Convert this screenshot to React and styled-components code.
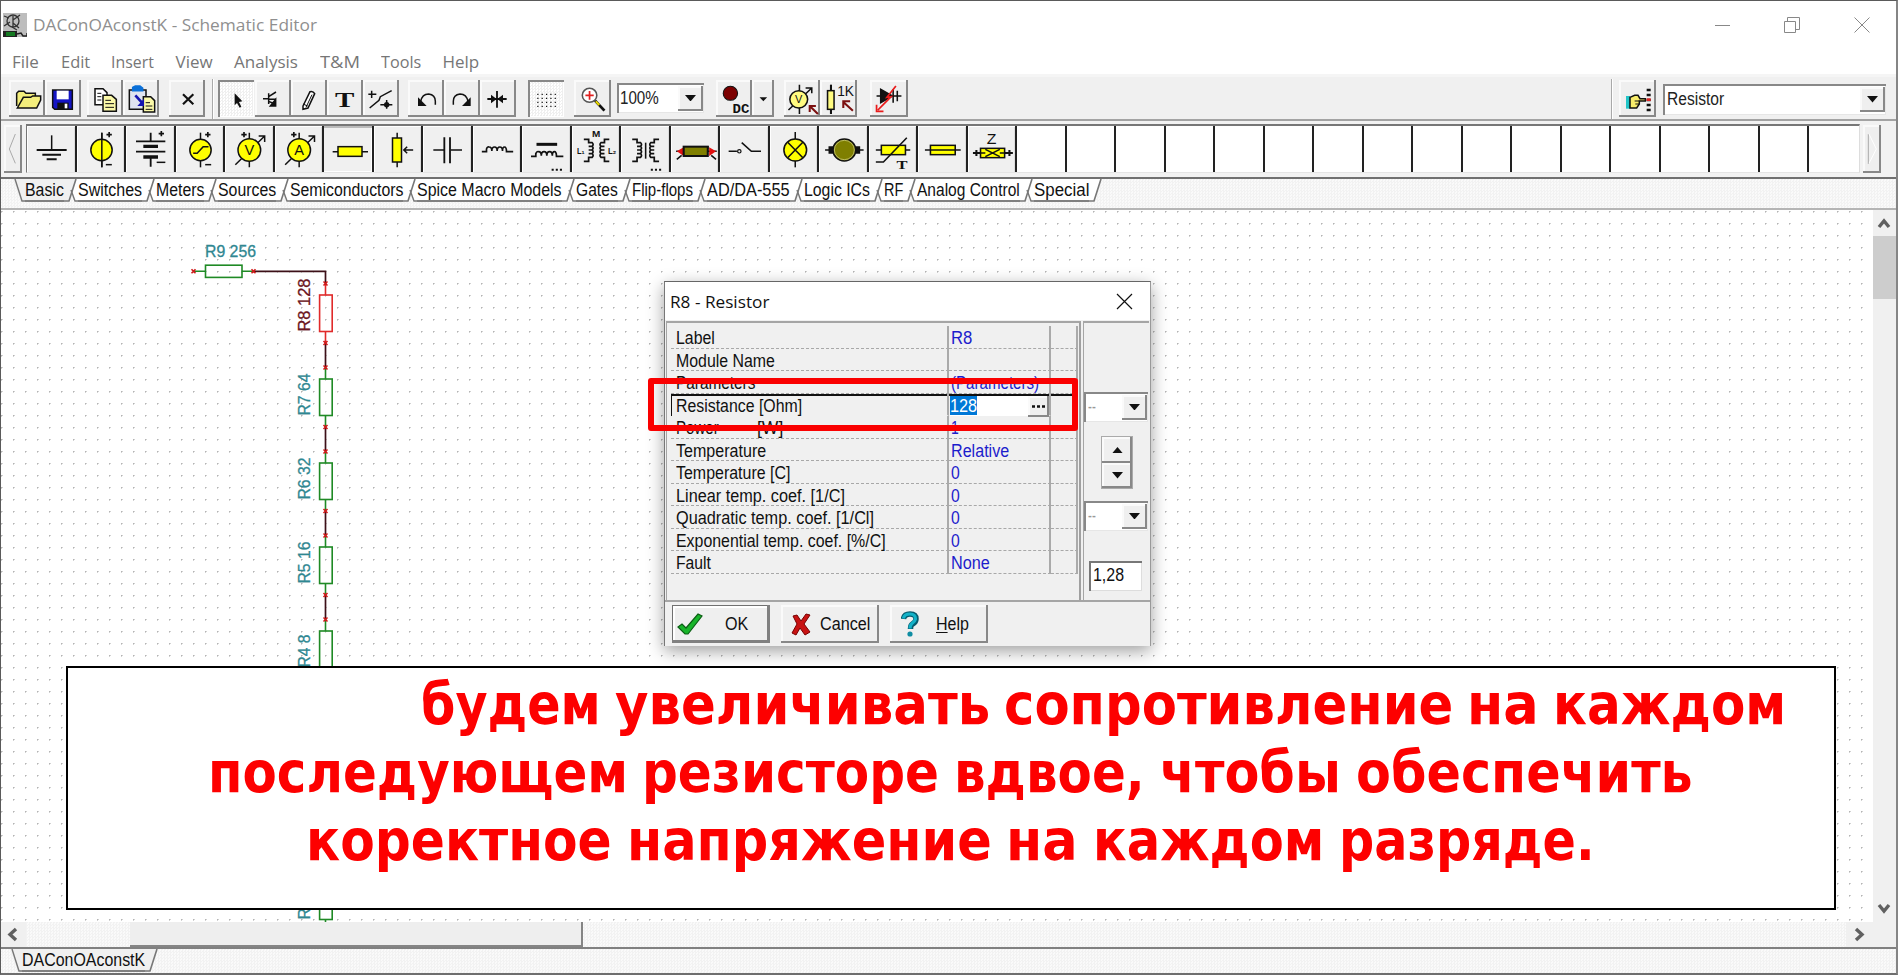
import React, { useLayoutEffect, useRef, useState } from 'react';
import styled, { createGlobalStyle, css } from 'styled-components';

const Global = createGlobalStyle`
  * { box-sizing: border-box; }
  body { margin: 0; background: #555; overflow: hidden; font-family: "Liberation Sans", Arial, sans-serif; font-size: 17.5px; color: #111; }
  svg { display: block; flex: none; }
`;

const sans = '"Liberation Sans", Arial, sans-serif';
const humanist = '"Open Sans", "Noto Sans", sans-serif';
const checker = css`
  background: repeating-conic-gradient(#f2f2f2 0% 25%, #fafafa 0% 50%) 0 0 / 3px 3px;
`;
const raised = css`
  background: #efefef;
  box-shadow: inset -2px -2px 0 #888, inset 2px 2px 0 #fafafa, inset 0 0 0 1px #e4e4e4;
`;

/* Text stretched to an exact width */
const FitBox = styled.span`
  display: inline-block;
  flex: none;
  width: ${(p) => p.$w}px;
  white-space: pre;
`;
const FitInner = styled.span`
  display: inline-block;
  transform-origin: 0 50%;
`;
function Fit({ w, children }) {
  const ref = useRef(null);
  const [scale, setScale] = useState(1);
  useLayoutEffect(() => {
    setScale(w / ref.current.offsetWidth);
  }, [w]);
  return (
    <FitBox $w={w}>
      <FitInner ref={ref} style={{ transform: `scaleX(${scale})` }}>{children}</FitInner>
    </FitBox>
  );
}

const Window = styled.div`
  position: relative;
  width: 1898px;
  height: 975px;
  display: flex;
  flex-direction: column;
  background: #fff;
  border: 1px solid #5a5a5a;
  border-right: 2px solid #858585;
  border-bottom: 2px solid #6e6e6e;
  overflow: hidden;
`;
const TitleBar = styled.div`
  height: 47px;
  flex: none;
  display: flex;
  align-items: center;
  padding-left: 2px;
  font-family: ${humanist};
  font-size: 17px;
  color: #8f8f8f;
`;
const TitleText = styled.div`
  margin-left: 6px;
  flex: 1;
`;
const WindowControls = styled.div`
  display: flex;
  gap: 54px;
  padding-right: 26px;
`;
const MenuBar = styled.div`
  height: 26px;
  flex: none;
  display: flex;
  align-items: center;
  gap: 21.5px;
  padding-left: 11px;
  font-family: ${humanist};
  font-size: 17px;
  color: #767676;
`;
const ToolBar = styled.div`
  height: 47px;
  flex: none;
  display: flex;
  align-items: flex-start;
  padding: 6px 0 0 8px;
  background: #f0f0f0;
  border-top: 3px solid #f5f5f5;
  border-bottom: 2px solid #a3a3a3;
`;
const ToolButton = styled.div`
  width: ${(p) => p.$w || 36}px;
  height: 37px;
  margin: -3px 0 0 ${(p) => p.$ml || 0}px;
  flex: none;
  ${raised}
  ${(p) => p.$pressed && css`
    background: repeating-conic-gradient(#efefef 0% 25%, #fff 0% 50%) 0 0 / 3px 3px;
    box-shadow: inset 2px 2px 0 #888, inset -1px -1px 0 #fff;
  `}
`;
const Divider = styled.div`
  width: 2px;
  height: 40px;
  margin: -4px 0 0 ${(p) => p.$ml}px;
  flex: none;
  background: #a9a9a9;
  border-right: 1px solid #fff;
`;
const Combo = styled.div`
  display: flex;
  align-items: center;
  flex: none;
  width: ${(p) => p.$w}px;
  height: ${(p) => p.$h || 30}px;
  margin: ${(p) => p.$m || 0};
  padding: 2px 1px 2px ${(p) => (p.$pl ?? 4)}px;
  background: #fff;
  box-shadow: inset 2px 2px 0 #888, inset -1px -1px 0 #e6e6e6;
  justify-content: space-between;
  color: ${(p) => p.$c || '#222'};
`;
const ArrowButton = styled.div`
  width: 25px;
  height: ${(p) => p.$h || 25}px;
  flex: none;
  display: flex;
  align-items: center;
  justify-content: center;
  ${raised}
`;
const PartsBar = styled.div`
  height: 58px;
  flex: none;
  display: flex;
  align-items: flex-start;
  padding: 3px 0 0 3px;
  background: #f2f2f2;
  border-bottom: 2px solid #707070;
`;
const ScrollButton = styled.div`
  width: 18px;
  height: 48px;
  margin-top: 1px;
  flex: none;
  ${raised}
`;
const PartsTray = styled.div`
  display: flex;
  width: 1834px;
  height: 49px;
  margin: 0 3px 0 4px;
  flex: none;
  border: solid;
  border-width: 2px 1px 1px 1px;
  border-color: #777 #ddd #e5e5e5 #777;
  background: #fff;
`;
const PartCell = styled.div`
  width: 49.5px;
  flex: none;
  border-right: 2px solid #222;
  background: ${(p) => (p.$filled ? '#f0f0f0' : '#fff')};
  box-shadow: ${(p) => (p.$active ? 'inset 0 2px 0 #bbb, inset -1px -1px #fff' : p.$filled ? 'inset 1px 1px 0 #fff, inset -1px 0 0 #ddd' : 'none')};
  &:last-child { border-right: none; }
`;
const TabStrip = styled.div`
  height: 31px;
  flex: none;
  display: flex;
  align-items: flex-start;
  padding-left: 10px;
  border-bottom: 2px solid #b5b5b5;
  ${checker}
`;
const TabLabel = styled.div`
  height: 23px;
  line-height: 23px;
  flex: none;
  background: ${(p) => (p.$active ? '#f0f0f0' : '#fff')};
  border-bottom: 2px solid #808080;
`;
const Workspace = styled.div`
  height: 712px;
  flex: none;
  display: flex;
`;
const Canvas = styled.div`
  width: 1872px;
  flex: none;
  background: radial-gradient(circle at 0.5px 0.5px, #b4b4b4 0.8px, transparent 1.3px) 0 1px / 12px 12px #fff;
`;
const VScroll = styled.div`
  width: 23px;
  background: #f0f0f0;
  display: flex;
  flex-direction: column;
  justify-content: space-between;
`;
const VThumb = styled.div`
  height: 63px;
  background: #cdcdcd;
`;
const VTop = styled.div``;
const HScroll = styled.div`
  height: 25px;
  flex: none;
  display: flex;
  ${checker}
`;
const HEnd = styled.div`
  width: ${(p) => p.$w}px;
  background: #f0f0f0;
`;
const HThumb = styled.div`
  width: 453px;
  margin: 0 auto 0 104px;
  background: #eee;
  box-shadow: inset -2px -2px 0 #858585;
`;
const SheetStrip = styled.div`
  flex: 1;
  display: flex;
  border-top: 2px solid #808080;
  padding-left: 7px;
  ${checker}
`;

/* dialog */
const Dialog = styled.div`
  position: absolute;
  left: 663px;
  top: 280px;
  width: 487px;
  height: 365px;
  display: flex;
  flex-direction: column;
  background: #f0f0f0;
  border-top: 1px solid #666;
  border-left: 1px solid #777;
  border-right: 1px solid #999;
  box-shadow: 0 5px 16px rgba(0, 0, 0, 0.38);
`;
const DialogTitle = styled.div`
  height: 38px;
  flex: none;
  display: flex;
  align-items: center;
  justify-content: space-between;
  padding: 0 17px 0 5px;
  background: #fff;
  color: #111;
  font-family: ${humanist};
  font-size: 16.5px;
`;
const DialogBody = styled.div`
  display: flex;
  gap: 2px;
  height: 282px;
  padding: 1px 1px 0 1px;
  border-bottom: 2px solid #a5a5a5;
`;
const GridPane = styled.div`
  width: 415px;
  padding: 3px 3px 0 4px;
  border-top: 2px solid #a5a5a5;
  border-left: 1px solid #a5a5a5;
  border-right: 2px solid #a0a0a0;
`;
const Row = styled.div`
  display: flex;
  height: 22.5px;
  width: 407px;
  line-height: 24px;
  box-shadow: ${(p) => (p.$focus ? 'inset 0 2px 0 #111, inset 1px 0 0 #111' : 'none')};
`;
const Cell = styled.div`
  width: ${(p) => p.$w}px;
  flex: none;
  display: flex;
  padding-left: ${(p) => p.$pl ?? 2}px;
  color: ${(p) => p.$c || '#111'};
  border-bottom: 1px dashed ${(p) => (p.$focus ? 'transparent' : '#a8a8a8')};
  border-right: 2px solid #aaa;
`;
const UnitGap = styled.span`
  width: 38px;
`;
const Editor = styled.div`
  display: flex;
  justify-content: space-between;
  width: 99px;
  height: 20px;
  margin-top: 2px;
  line-height: 20px;
  background: #fff;
`;
const Selection = styled.span`
  height: 19px;
  background: #0078d7;
  color: #fff;
`;
const MoreButton = styled.div`
  width: 21px;
  height: 21px;
  ${raised}
`;
const SidePane = styled.div`
  width: 66px;
  border-top: 2px solid #a5a5a5;
  border-left: 1px solid #a5a5a5;
  display: flex;
  flex-direction: column;
  align-items: flex-start;
`;
const Spinner = styled.div`
  display: flex;
  flex-direction: column;
  width: 32px;
  height: 53px;
  margin: 14px 0 12px 17px;
  border: 1px solid #aaa;
`;
const SpinHalf = styled.div`
  flex: 1;
  display: flex;
  align-items: center;
  justify-content: center;
  ${raised}
`;
const NumberField = styled.div`
  width: 53px;
  height: 30px;
  margin: 30px 0 0 5px;
  padding-left: 4px;
  line-height: 29px;
  background: #fff;
  box-shadow: inset 2px 2px 0 #777, inset -1px -1px 0 #ddd;
`;
const DialogFooter = styled.div`
  display: flex;
  gap: 11px;
  padding: 3px 0 0 7px;
`;
const PushButton = styled.div`
  width: 98px;
  height: 38px;
  display: flex;
  align-items: center;
  gap: ${(p) => p.$gap}px;
  padding-left: ${(p) => p.$pl}px;
  ${raised}
  ${(p) => p.$default && css`
    box-shadow: inset -3px -3px 0 #808080, inset 1px 1px 0 #707070, inset 3px 3px 0 #fff;
  `}
`;
const Underlined = styled.span`
  text-decoration: underline;
  text-underline-offset: 2px;
`;
const Highlight = styled.div`
  position: absolute;
  left: 647px;
  top: 377px;
  width: 430px;
  height: 53px;
  border: 6px solid #fa0000;
  border-radius: 3px;
`;
const Caption = styled.div`
  position: absolute;
  left: 65px;
  top: 665px;
  width: 1770px;
  height: 244px;
  border: 2px solid #000;
  background: #fff;
  font-family: "DejaVu Sans", sans-serif;
  font-weight: bold;
  font-size: 56.5px;
  line-height: 68px;
  color: #fd0000;
  padding-top: 3px;
`;
const CaptionLine = styled.div`
  display: flex;
  height: 68px;
  padding-left: ${(p) => p.$x}px;
`;
const Space = styled.span`
  width: ${(p) => p.$w}px;
  flex: none;
  white-space: pre;
  font-size: 20px;
`;

/* drawings */
function Icon({ vb, w, h, children, sw = 4.5, ...rest }) {
  return (
    <svg width={w} height={h} viewBox={vb} preserveAspectRatio="none" fill="none" stroke="#111" strokeWidth={sw} fontFamily={sans} {...rest}>
      {children}
    </svg>
  );
}
const T = ({ children, ...p }) => <text stroke="none" fill="#111" {...p}>{children}</text>;
const Down = ({ s = 11, up }) => (
  <svg width={s} height={s / 2 + 1} viewBox="0 0 12 6" preserveAspectRatio="none"><path d={up ? 'M0 6L6 0L12 6Z' : 'M0 0H12L6 6Z'} fill="#111" /></svg>
);
const Chevron = ({ w, h, d }) => (
  <svg width={w} height={h} viewBox={`0 0 ${w} ${h}`} fill="none" stroke="#606060" strokeWidth="3.4"><path d={d} /></svg>
);

const leftTools = [
  { x: 27, ml: 0, d: <>
    <path d="M50 318V280L56 274H72L78 280H106V290" fill="#f4ee7c" /><path d="M52 324L70 292H92L98 288H122V300L110 324Z" fill="#f4ee7c" /></> },
  { x: 135, ml: 0, d: <>
    <path d="M158 270H217V328H164L158 322Z" fill="#1414c4" /><path d="M170 272H206V298H170Z" fill="#fff" stroke="none" /><path d="M172 308H206V328H172Z" fill="#111" stroke="none" /><path d="M194 311H202V325H194Z" fill="#fff" stroke="none" /></> },
  { x: 260, ml: 6, d: <>
    <path d="M284 266H308L320 278V314H284Z" fill="#fff" /><path d="M291 280H303M291 290H303M291 300H303" strokeWidth="3" /><path d="M308 286H334L348 298V334H308Z" fill="#fbf9a8" /><path d="M315 301H332M315 311H341M315 322H341" strokeWidth="3" /></> },
  { x: 369, ml: 0, d: <>
    <path d="M388 270H438V328H388Z" fill="#dfe4f0" /><path d="M398 262L406 258H420L428 264V272H398Z" fill="#0b70d8" stroke="#0b70d8" /><path d="M430 290H452L464 302V336H430Z" fill="#fbf9a8" /><path d="M437 308H450M437 318H457M437 328H457" strokeWidth="3" /><path d="M406 286L426 308" stroke="#1414b0" strokeWidth="8" /><path d="M432 296V318H412Z" fill="#1414b0" stroke="none" /></> },
  { x: 508, ml: 10, d: <path d="M550 283L581 313M581 283L550 313" strokeWidth="6.5" /> },
];
const editTools = [
  { x: 651, ml: 4, pressed: true, d: <path d="M701 280V316L708 309L716 323L721 320L714 306L724 304Z" fill="#111" stroke="none" /> },
  { x: 762, ml: 1, d: <><path d="M786 296H803M803 280V312M803 290L825 276M803 298H825M803 304L822 312" /><path d="M824 298V318H808Z" fill="#111" /></> },
  { x: 870, ml: 0, d: <><path d="M906 318L927 275Q936 272 941 281L921 324L906 328Z" fill="#fff" /><path d="M915 322L933 284M906 312L920 318" strokeWidth="3" /></> },
  { x: 978, ml: 0, d: <T x="1031" y="320" fontSize="66" fontFamily='"Liberation Serif", serif' fontWeight="bold" textAnchor="middle" textLength="58" lengthAdjust="spacingAndGlyphs">T</T> },
  { x: 1086, ml: 0, d: <><path d="M1102 283H1126M1112 272V294M1106 324L1134 301L1138 290L1172 272M1138 314H1174M1157 300V326" /><circle cx="1157" cy="314" r="8" fill="#111" stroke="none" /></> },
  { x: 1224, ml: 9, d: <><path d="M1262 305Q1266 282 1286 282Q1306 284 1306 304V314" /><path d="M1254 292V318H1280Z" fill="#111" stroke="none" /></> },
  { x: 1332, ml: 0, d: <><path d="M1404 305Q1400 282 1380 282Q1360 284 1360 304V314" /><path d="M1412 292V318H1386Z" fill="#111" stroke="none" /></> },
  { x: 1440, ml: 0, d: <><path d="M1462 297H1520M1491 273V323" strokeWidth="5.5" /><path d="M1473 284L1490 297L1473 310ZM1509 284L1492 297L1509 310Z" fill="#111" stroke="none" /></> },
];

const plus = (x, y) => <path d={`M${x - 8} ${y}H${x + 8}M${x} ${y - 8}V${y + 8}`} strokeWidth="5" />;
const Coil = ({ x, y }) => <path d={`M${x} ${y}h14v-8q3 -8 8 -6q8 0 8 12q0 -12 8 -12q8 0 8 12q0 -12 8 -12q8 0 8 12q0 -12 6 -12q6 0 6 14h20`} strokeWidth="5" />;
const Winding = ({ x, dir }) => <path d={`M${x} 208h${14 * dir}v10${[0, 1, 2, 3].map(() => `h${10 * dir}q${6 * dir} 5 0 11h${-10 * dir}`).join('')}v12h${-14 * dir}`} strokeWidth="5" />;
const yellow = '#ffff00';

/* a: part icons drawn in a 3:1 grid, b: in a slightly narrower grid */
const parts = [
  { d: <><path d="M155 406V450" /><path d="M110 450H200M127 464H183M140 478H170" strokeWidth="6" /></> },
  { d: <><path d="M304 398V502" /><circle cx="303" cy="450" r="32" fill={yellow} /><path d="M304 398V502" />{plus(326, 404)}<path d="M316 494H334" /></> },
  { d: <><path d="M452 398V424M408 424H496M408 455H496M452 472V500" strokeWidth="5.5" /><path d="M430 439H474M430 471H474" strokeWidth="10" />{plus(484, 401)}<path d="M470 487H496" /></> },
  { d: <><path d="M600 398V502" /><circle cx="600" cy="450" r="32" fill={yellow} /><path d="M578 460H590L608 440H624" />{plus(622, 404)}<path d="M614 494H632" /></> },
  { d: <><path d="M748 398V502M706 494L794 408M776 408H794V426" /><circle cx="748" cy="450" r="34" fill={yellow} /><T x="748" y="465" fontSize="44" textAnchor="middle">V</T>{plus(732, 404)}</> },
  { d: <><path d="M896 398V502M854 494L942 408M924 408H942V426" /><circle cx="896" cy="450" r="34" fill={yellow} /><T x="896" y="465" fontSize="44" textAnchor="middle">A</T>{plus(880, 404)}</> },
  { active: true, d: <><path d="M998 455H1104" /><rect x="1014" y="440" width="72" height="29" fill={yellow} /></> },
  { d: <><path d="M1190 398V502" /><rect x="1176" y="414" width="27" height="72" fill={yellow} /><path d="M1210 450H1238M1220 440L1210 450L1220 460" /></> },
  { d: <><path d="M1300 450H1332M1352 450H1386" /><path d="M1333 412V490M1350 412V490" strokeWidth="5.5" /></> },
  { d: <Coil x={1444} y={455} /> },
  { b: 1, d: <><Coil x={90} y={259} /><path d="M106 223H166" strokeWidth="9" /><path d="M150 299h6m6 0h6m6 0h6" strokeWidth="6" /></> },
  { b: 1, d: <><T x="278" y="200" fontSize="29" fontWeight="bold" textAnchor="middle">M</T><Winding x={242} dir={1} /><Winding x={316} dir={-1} /><T x="222" y="252" fontSize="29" fontWeight="bold" textLength="22" lengthAdjust="spacingAndGlyphs">L₁</T><T x="312" y="252" fontSize="29" fontWeight="bold" textLength="24" lengthAdjust="spacingAndGlyphs">L₂</T></> },
  { b: 1, d: <><Winding x={384} dir={1} /><Winding x={462} dir={-1} /><path d="M423 218V266" /><path d="M438 299h6m6 0h6m6 0h6" strokeWidth="6" /></> },
  { b: 1, d: <><path d="M510 244H628M512 268L526 256M626 268L612 256M602 228V238" /><path d="M512 244L532 232V258ZM626 244L606 232V258Z" fill="#e01010" stroke="none" /><rect x="532" y="230" width="70" height="28" fill="#7f7f00" strokeWidth="6" /></> },
  { b: 1, d: <><path d="M664 244H688M702 218L730 244H758" /><circle cx="695" cy="244" r="5" strokeWidth="3.5" /></> },
  { b: 1, d: <><path d="M856 186V292" /><circle cx="856" cy="240" r="33" fill={yellow} /><path d="M834 217L878 263M878 217L834 263" /></> },
  { b: 1, d: <><path d="M944 240H1056" /><path d="M954 240H1046" strokeWidth="22" /><circle cx="1000" cy="240" r="33" fill="#7f7f00" /><circle cx="1000" cy="240" r="29" stroke="#d8d890" strokeWidth="2" /></> },
  { b: 1, d: <><path d="M1090 240H1190" /><rect x="1106" y="226" width="70" height="28" fill={yellow} /><path d="M1090 276H1112L1180 203" /><T x="1166" y="296" fontSize="38" fontFamily='"Liberation Serif", serif' fontWeight="bold" textAnchor="middle" textLength="32" lengthAdjust="spacingAndGlyphs">T</T></> },
  { b: 1, d: <><rect x="1250" y="226" width="72" height="28" fill={yellow} /><path d="M1234 240H1338" /></> },
  { b: 1, d: <><T x="1426" y="221" fontSize="46" textAnchor="middle">Z</T><path d="M1372 249H1488M1382 240V258M1478 240V258" strokeWidth="6" /><rect x="1394" y="235" width="70" height="28" fill={yellow} /><path d="M1408 238L1450 260M1450 238L1408 260M1394 249H1408M1450 249H1464" /></> },
];

const tabs = [['Basic', 39], ['Switches', 64], ['Meters', 48], ['Sources', 58], ['Semiconductors', 113], ['Spice Macro Models', 145], ['Gates', 42], ['Flip-flops', 61], ['AD/DA-555', 83], ['Logic ICs', 66], ['RF', 19], ['Analog Control', 103], ['Special', 55]];

const TabEdge = ({ first, last, active }) => (
  <svg width="14" height="23" viewBox="0 0 14 23">
    {!first && <path d="M0 0H12L5 23H0Z" fill={active ? '#f0f0f0' : '#fff'} />}
    {!last && <path d={first ? 'M2 0H14V23H10Z' : 'M11 4L8 12L11 23H14V0H12Z'} fill={first ? '#f0f0f0' : '#fff'} />}
    <g fill="none" stroke="#777" strokeWidth="1.4">
      {first ? <path d="M4 0L11 22H14" /> : <path d="M0 22H5L12 0" strokeWidth="1.6" />}
      {!first && !last && <path d="M7 11L11 22H14" />}
    </g>
  </svg>
);

const rows = [
  ['Label', 39, 'R8', 21], ['Module Name', 99], ['Parameters', 79, '(Parameters)', 88],
  ['Resistance [Ohm]', 126, '128', 27], ['Power', 43, '1', 8, '[W]'], ['Temperature', 90, 'Relative', 58],
  ['Temperature [C]', 114, '0', 9], ['Linear temp. coef. [1/C]', 169, '0', 9], ['Quadratic temp. coef. [1/Cl]', 198, '0', 9],
  ['Exponential temp. coef. [%/C]', 210, '0', 9], ['Fault', 35, 'None', 39],
];

/* each caption word with its start and end on the line */
const captionLines = [
  [['будем', 421, 600.5], ['увеличивать', 615, 990.5], ['сопротивление', 1003.5, 1452.5], ['на', 1467, 1538.5], ['каждом', 1553, 1786]],
  [['последующем', 207.7, 627.5], ['резисторе', 642.5, 939.5], ['вдвое,', 954, 1145], ['чтобы', 1160, 1341], ['обеспечить', 1356, 1692.5]],
  [['коректное', 306, 611.5], ['напряжение', 627, 991.5], ['на', 1006, 1077.5], ['каждом', 1093, 1324], ['разряде.', 1339, 1595]],
];
const captionLeft = 68;

const Node = ({ x, y }) => <path d={`M${x - 2} ${y - 2}L${x + 2} ${y + 2}M${x + 2} ${y - 2}L${x - 2} ${y + 2}`} stroke="#d01818" strokeWidth="1.6" />;
const chain = [['R8 128', 53], ['R7 64', 42], ['R6 32', 42], ['R5 16', 42], ['R4 8', 33], ['R3 4', 33], ['R2 2', 33], ['R1 1', 33]];

function Schematic() {
  return (
    <svg width="1872" height="712" viewBox="1 210 1872 712" fill="none" fontFamily={sans} fontSize="17">
      <path d="M253 271.3H325.5V283" stroke="#3d1018" strokeWidth="1.7" />
      <path d="M193 271.3H205M242 271.3H253" stroke="#1f8a25" strokeWidth="1.6" />
      <rect x="205.5" y="265.2" width="36.5" height="12.2" stroke="#1f8a25" strokeWidth="1.6" />
      <Node x={193.5} y={271.3} /><Node x={253.5} y={271.3} />
      <text x="205" y="257" fill="#2f8791" stroke="#2f8791" strokeWidth="0.3" textLength="51" lengthAdjust="spacingAndGlyphs">R9 256</text>
      {chain.map(([name, len], i) => {
        const y = i * 84;
        const c = i === 0 ? '#e02a2a' : '#1f8a25';
        const ink = i === 0 ? '#6b1420' : '#2f8791';
        return (
          <g key={name}>
            <path d={`M325.5 ${y + 343}V${y + 367}`} stroke="#3d1018" strokeWidth="1.7" />
            <path d={`M325.5 ${y + 283}V${y + 295}M325.5 ${y + 332}V${y + 343}`} stroke={c} strokeWidth="1.6" />
            <rect x="319.6" y={y + 295} width="12.6" height="36.5" stroke={c} strokeWidth="1.6" />
            <Node x={325.5} y={y + 283.5} /><Node x={325.5} y={y + 343} />
            <text transform={`translate(310 ${y + 331.5}) rotate(-90)`} fill={ink} stroke={ink} strokeWidth="0.3" textLength={len} lengthAdjust="spacingAndGlyphs">{name}</text>
          </g>
        );
      })}
    </svg>
  );
}

export default function App() {
  return (
    <Window>
      <Global />
      <TitleBar>
        <svg width="24" height="24" viewBox="0 0 24 24"><rect width="24" height="24" fill="#bdbdbd" /><g fill="none" stroke="#333" strokeWidth="1.3"><circle cx="10" cy="8" r="6" /><path d="M1 3L6 5M1 13L7 9M10 3V14M10 7L17 2M10 10L16 15M9 14L14 17" /></g><rect y="18" width="14" height="6" fill="#222" /><rect x="3" y="19" width="9" height="4" fill="#157a22" /><path d="M14 21L18 20L20 23H24V20" stroke="#222" strokeWidth="1.5" fill="none" /></svg>
        <TitleText><Fit w={284}>DAConOAconstK - Schematic Editor</Fit></TitleText>
        <WindowControls>
          <svg width="15" height="16" viewBox="0 0 15 16"><path d="M0 8.5H15" stroke="#888" /></svg>
          <svg width="16" height="16" viewBox="0 0 16 16" fill="none" stroke="#888"><path d="M.5 4.5H11.5V15.5H.5ZM3.5 4V.5H15.500V12.500H12" /></svg>
          <svg width="16" height="16" viewBox="0 0 16 16"><path d="M.5 .5L15.500 15.500M15.500 .5L.5 15.500" stroke="#888" /></svg>
        </WindowControls>
      </TitleBar>
      <MenuBar>
        {[['File', 27], ['Edit', 29], ['Insert', 43], ['View', 37], ['Analysis', 64], ['T&M', 40], ['Tools', 40], ['Help', 37]].map(([t, w]) => <Fit key={t} w={w}>{t}</Fit>)}
      </MenuBar>
      <ToolBar>
        {leftTools.map((t) => (
          <ToolButton key={t.x} $ml={t.ml}><Icon w={36} h={37} vb={`${t.x} 240 108 111`}>{t.d}</Icon></ToolButton>
        ))}
        <Divider $ml={7} />
        {editTools.map((t) => (
          <ToolButton key={t.x} $ml={t.ml} $pressed={t.pressed}><Icon w={36} h={37} vb={`${t.x} 240 108 111`}>{t.d}</Icon></ToolButton>
        ))}
        <ToolButton $ml={12} $pressed><Icon w={36} h={37} vb="81 30 105 111">
          {[73, 85, 97, 109].map((y) => <path key={y} d={`M108 ${y}H170`} strokeDasharray="3.5 9.2" strokeWidth="3.5" />)}
        </Icon></ToolButton>
        <ToolButton $ml={10} $w={37}><Icon w={37} h={37} vb="215 30 107 111">
          <path d="M276 92L303 122" strokeWidth="8" /><path d="M278 94L288 105" stroke="#e8d800" strokeWidth="6" /><circle cx="260" cy="76" r="21" fill="#fff" stroke="#555" /><path d="M248 76H272M260 63V89" stroke="#e02020" strokeWidth="5" />
        </Icon></ToolButton>
        <Combo $w={87} $h={30} $pl={3} $m="0 0 0 6px"><Fit w={39}>100%</Fit><ArrowButton><Down /></ArrowButton></Combo>
        <ToolButton $ml={12}><Icon w={36} h={37} vb="628 30 105 111">
          <circle cx="670" cy="70" r="21" fill="#7c0000" strokeWidth="3" /><T x="676" y="128" fontSize="41" fontFamily='"Liberation Mono", monospace' fontWeight="bold">DC</T>
        </Icon></ToolButton>
        <ToolButton $w={22}><Icon w={22} h={37} vb="733 30 64 111"><path d="M755 82H777L766 94Z" fill="#111" stroke="none" /></Icon></ToolButton>
        <ToolButton $ml={10}><Icon w={36} h={37} vb="825 30 105 111">
          <path d="M870 44V132M838 120L906 54M888 54H906V70" /><circle cx="868" cy="88" r="26" fill="#fffb80" /><T x="868" y="100" fontSize="32" textAnchor="middle">V</T><path d="M900 108L924 132M900 126V108H918" stroke="#7c1010" strokeWidth="6" />
        </Icon></ToolButton>
        <ToolButton $w={37}><Icon w={37} h={37} vb="930 30 108 111">
          <path d="M962 44V132" strokeWidth="6" /><rect x="952" y="62" width="19" height="56" fill="#fffb80" /><T x="980" y="79" fontSize="44" textLength="49" lengthAdjust="spacingAndGlyphs">1K</T><path d="M998 96L1026 122M998 114V94H1018" stroke="#7c1010" strokeWidth="6" />
        </Icon></ToolButton>
        <ToolButton $ml={13} $w={38}><Icon w={38} h={37} vb="1077 30 110 111">
          <path d="M1096 78H1168M1144 58V98M1156 62V94" /><path d="M1108 58V98L1142 78Z" fill="#111" /><path d="M1152 48L1126 82L1138 80L1100 120M1096 104V124H1116" stroke="#e81c1c" strokeWidth="5" />
        </Icon></ToolButton>
        <Divider $ml={703} />
        <ToolButton $ml={6} $w={37}><Icon w={37} h={37} vb="175 240 111 111">
          <path d="M196 288H208V326H196Z" fill="#22c5c8" stroke="none" /><path d="M208 292L222 286H232L238 296H254V303H236V312L228 324H208Z" fill="#f7ec6a" /><path d="M236 303H222M236 312H224" strokeWidth="3" /><path d="M264 266V334" strokeWidth="12" strokeDasharray="8 7" /><path d="M264 295V303" stroke="#e02020" strokeWidth="12" />
        </Icon></ToolButton>
        <Combo $w={223} $h={31} $m="1px 0 0 7px"><Fit w={57}>Resistor</Fit><ArrowButton><Down /></ArrowButton></Combo>
      </ToolBar>
      <PartsBar>
        <ScrollButton><Icon w={18} h={48} vb="12 375 54 144" stroke="#aaa" sw={3}><path d="M46 402L28 447L46 490" /></Icon></ScrollButton>
        <PartsTray>
          {Array.from({ length: 37 }, (_, i) => {
            const p = parts[i];
            const x = p && p.b ? (27 + 49.5 * i - 500) * 2.904 : 81 + 148.5 * i;
            return (
              <PartCell key={i} $filled={!!p} $active={p && p.active}>
                {p && <Icon w={47.5} h={46} vb={p.b ? `${x} 168 138 138` : `${x} 378 142.5 138`}>{p.d}</Icon>}
              </PartCell>
            );
          })}
        </PartsTray>
        <ScrollButton><Icon w={18} h={48} vb="908 375 54 144" stroke="#fff" sw={3}><path d="M924 402V492" stroke="#aaa" /><path d="M926 402L948 447L926 490" /></Icon></ScrollButton>
      </PartsBar>
      <TabStrip>
        <TabEdge first />
        {tabs.map(([t, w], i) => (
          <React.Fragment key={t}>
            <TabLabel $active={i === 0}><Fit w={w}>{t}</Fit></TabLabel>
            <TabEdge active={i === 0} last={i === tabs.length - 1} />
          </React.Fragment>
        ))}
      </TabStrip>
      <Workspace>
        <Canvas><Schematic /></Canvas>
        <VScroll>
          <VTop>
            <Chevron w={22} h={26} d="M6 17L11 11L16 17" />
            <VThumb />
          </VTop>
          <Chevron w={22} h={26} d="M6 9L11 15L16 9" />
        </VScroll>
      </Workspace>
      <HScroll>
        <HEnd $w={25}><Chevron w={25} h={25} d="M15 7L9 12.5L15 18" /></HEnd>
        <HThumb />
        <HEnd $w={50}><Chevron w={25} h={25} d="M10 7L16 12.500L10 18" /></HEnd>
      </HScroll>
      <SheetStrip>
        <TabEdge first />
        <TabLabel $active><Fit w={123}>DAConOAconstK</Fit></TabLabel>
        <TabEdge active last />
      </SheetStrip>

      <Dialog>
        <DialogTitle>
          <Fit w={99}>R8 - Resistor</Fit>
          <svg width="17" height="17" viewBox="0 0 17 17"><path d="M1 1L16 16M16 1L1 16" stroke="#111" strokeWidth="1.2" /></svg>
        </DialogTitle>
        <DialogBody>
          <GridPane>
            {rows.map(([label, lw, val, vw, unit]) => {
              const focus = label.startsWith('Resistance');
              return (
                <Row key={label} $focus={focus}>
                  <Cell $w={278} $pl={5} $focus={focus}><Fit w={lw}>{label}</Fit>{unit && <><UnitGap /><Fit w={26}>{unit}</Fit></>}</Cell>
                  <Cell $w={102} $pl={focus ? 1 : 2} $c="#1c1ccc" $focus={focus}>
                    {focus ? <Editor><Selection><Fit w={27}>{val}</Fit></Selection><MoreButton><svg width="21" height="20" viewBox="0 0 21 20"><path d="M4 10.500h3m2 0h3m2 0h3" stroke="#111" strokeWidth="2.500" /></svg></MoreButton></Editor> : val && <Fit w={vw}>{val}</Fit>}
                  </Cell>
                  <Cell $w={27} $focus={focus} />
                </Row>
              );
            })}
          </GridPane>
          <SidePane>
            <Combo $w={64} $h={30} $m="69px 0 0 0" $c="#999"><Fit w={8}>--</Fit><ArrowButton><Down s={11} /></ArrowButton></Combo>
            <Spinner><SpinHalf><Down up /></SpinHalf><SpinHalf><Down /></SpinHalf></Spinner>
            <Combo $w={64} $h={30} $c="#999"><Fit w={8}>--</Fit><ArrowButton><Down s={11} /></ArrowButton></Combo>
            <NumberField><Fit w={31}>1,28</Fit></NumberField>
          </SidePane>
        </DialogBody>
        <DialogFooter>
          <PushButton $default $pl={5} $gap={22}>
            <svg width="26" height="24" viewBox="0 0 26 24"><path d="M1 15L5 12L9 16L21 2L25 4L11 22H8Z" fill="#18b52a" stroke="#0b5f14" strokeWidth="1.2" /></svg>
            <Fit w={23}>OK</Fit>
          </PushButton>
          <PushButton $pl={10} $gap={9}>
            <svg width="20" height="23" viewBox="0 0 20 23"><path d="M2 3L6 2L10 8L15 1L19 2L13 11L19 19L14 22L9 15L5 22L1 20L6 11Z" fill="#c81212" stroke="#700" strokeWidth="1" /></svg>
            <Fit w={50}>Cancel</Fit>
          </PushButton>
          <PushButton $pl={11} $gap={17}>
            <svg width="18" height="26" viewBox="0 0 18 26" fill="none"><path d="M2.500 8Q3 3 9 3Q15 3 15 8Q15 11 11.500 13Q9.500 14 9.500 18" stroke="#075b6e" strokeWidth="5.500" /><path d="M2.500 7.500Q3 3 9 3Q14.500 3 14.500 8Q14 10.500 11 12.500Q9 14 9 17.500" stroke="#13b2c8" strokeWidth="3.200" /><circle cx="9" cy="23" r="2.600" fill="#0f8da3" /></svg>
            <Fit w={33}><Underlined>H</Underlined>elp</Fit>
          </PushButton>
        </DialogFooter>
      </Dialog>
      <Highlight />
      <Caption>
        {captionLines.map((line) => (
          <CaptionLine key={line[0][0]} $x={line[0][1] - captionLeft}>
            {line.map(([word, start, end], i) => (
              <React.Fragment key={word}>
                {i > 0 && <Space $w={start - line[i - 1][2]}>{' '}</Space>}
                <Fit w={end - start}>{word}</Fit>
              </React.Fragment>
            ))}
          </CaptionLine>
        ))}
      </Caption>
    </Window>
  );
}
